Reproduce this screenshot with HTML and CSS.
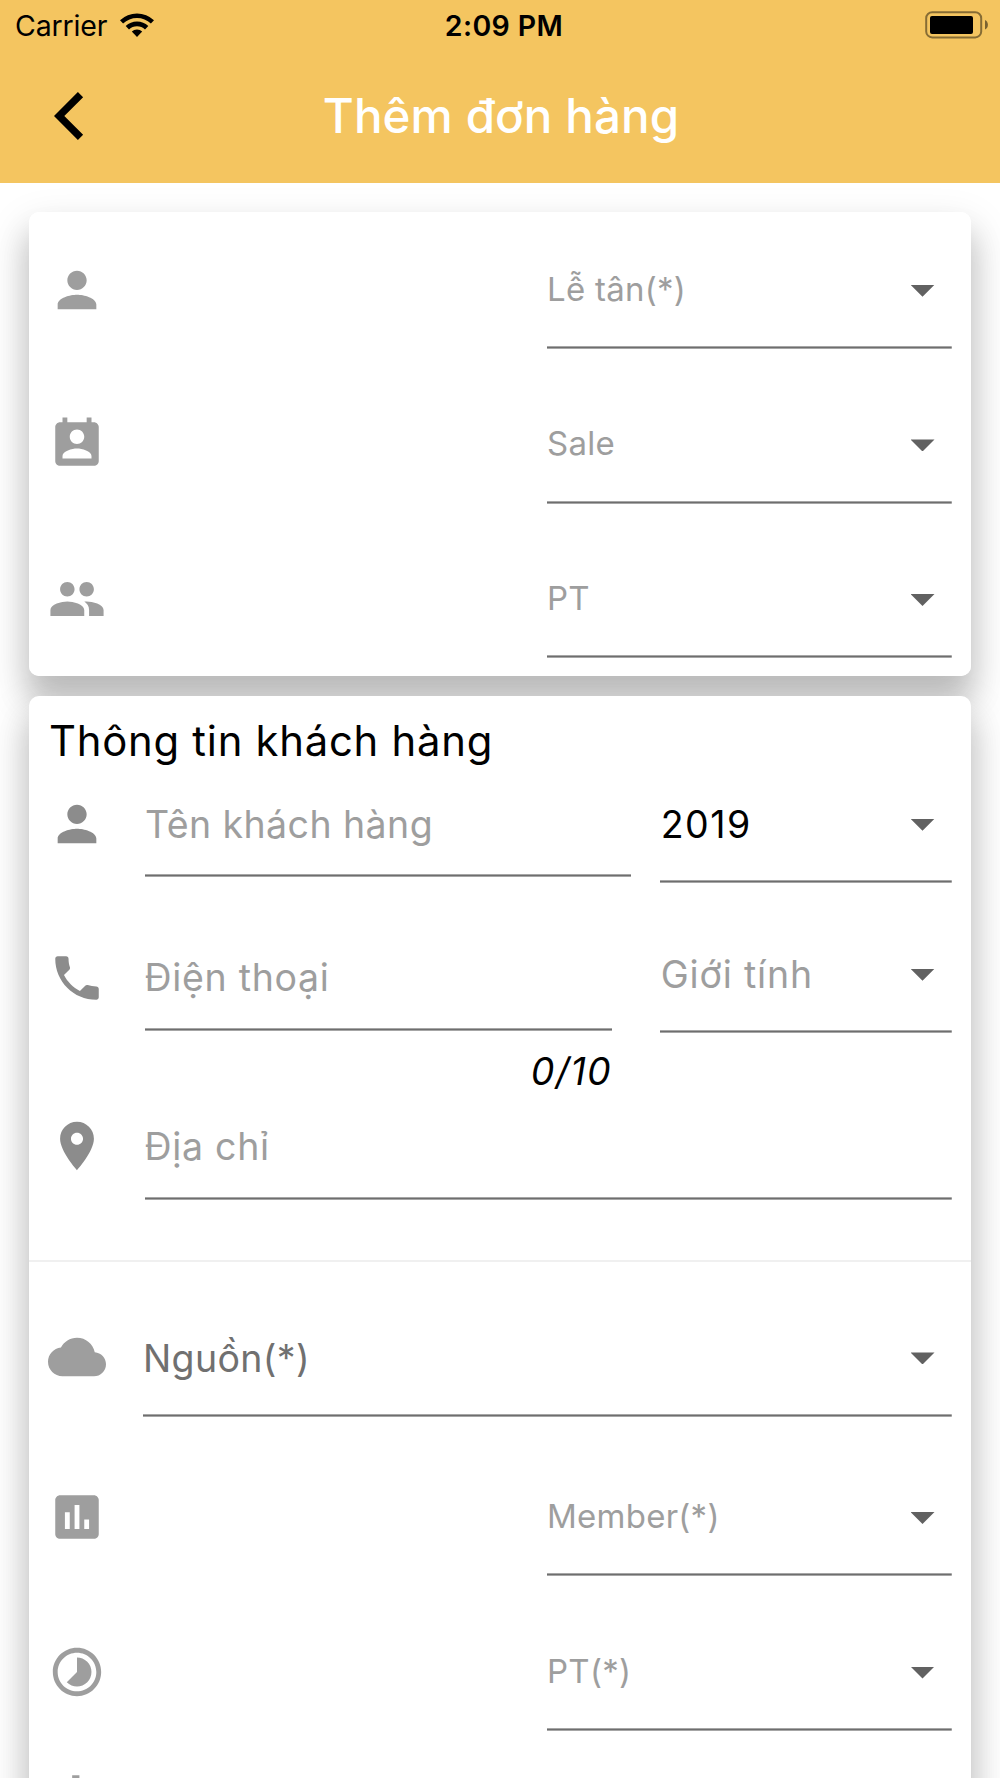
FILE: index.html
```
<!DOCTYPE html>
<html lang="vi">
<head>
<meta charset="utf-8">
<meta name="viewport" content="width=device-width, initial-scale=1">
<title>Thêm đơn hàng</title>
<link rel="stylesheet" href="styles.css">
</head>
<body>
<div class="screen">
  <header class="header">
    <div class="status">
      <div class="status-left">
        <span class="carrier">Carrier</span>
        <svg class="wifi" viewBox="0 0 34 24" aria-hidden="true">
          <path d="M0 7.2A24.6 24.6 0 0 1 34 7.2L30.9 10.6A20 20 0 0 0 3.1 10.6Z"/>
          <path d="M5.7 13A16.2 16.2 0 0 1 28.3 13L25 16.4A11.6 11.6 0 0 0 9 16.4Z"/>
          <path d="M11.8 18.6A7.5 7.5 0 0 1 22.2 18.6L17 24Z"/>
        </svg>
      </div>
      <span class="clock">2:09 PM</span>
      <svg class="battery" viewBox="0 0 64 28" aria-hidden="true">
        <rect x="1.2" y="1.2" width="55" height="25.2" rx="6" fill="none" stroke="#000" stroke-opacity=".45" stroke-width="2"/>
        <rect x="5" y="5" width="43" height="18" rx="2"/>
        <path d="M60 9v9.6c1.800-.6 2.900-2.500 2.900-4.800S61.800 9.600 60 9z" fill-opacity=".5"/>
      </svg>
    </div>
    <div class="navbar">
      <svg class="back" viewBox="0 0 30 48" aria-hidden="true"><path d="M26.500 2.700L5.200 24L26.500 45.300" fill="none" stroke="#000" stroke-width="7.400"/></svg>
      <h1 class="title">Thêm đơn hàng</h1>
    </div>
  </header>

  <main class="content">
    <section class="card card-staff">
      <div class="row">
        <svg class="icon" viewBox="0 0 24 24"><path d="M12 12c2.210 0 4-1.790 4-4s-1.790-4-4-4-4 1.790-4 4 1.790 4 4 4zm0 2c-2.670 0-8 1.340-8 4v2h16v-2c0-2.660-5.330-4-8-4z"/></svg>
        <div class="select half"><span>Lễ tân(*)</span><i class="caret"></i></div>
      </div>
      <div class="row">
        <svg class="icon" viewBox="0 0 24 24"><path d="M19 3h-1V1h-2v2H8V1H6v2H5c-1.110 0-2 .9-2 2v14c0 1.100.89 2 2 2h14c1.100 0 2-.9 2-2V5c0-1.100-.9-2-2-2zm-7 3c1.660 0 3 1.340 3 3s-1.340 3-3 3-3-1.340-3-3 1.340-3 3-3zm6 12H6v-1c0-2 4-3.100 6-3.100s6 1.100 6 3.100v1z"/></svg>
        <div class="select half"><span>Sale</span><i class="caret"></i></div>
      </div>
      <div class="row">
        <svg class="icon" viewBox="0 0 24 24"><path d="M16 11c1.660 0 2.990-1.340 2.990-3S17.660 5 16 5c-1.660 0-3 1.340-3 3s1.340 3 3 3zm-8 0c1.660 0 2.990-1.340 2.990-3S9.660 5 8 5C6.340 5 5 6.340 5 8s1.340 3 3 3zm0 2c-2.330 0-7 1.170-7 3.500V19h14v-2.500c0-2.330-4.670-3.500-7-3.500zm8 0c-.29 0-.62.020-.97.050 1.160.84 1.970 1.970 1.970 3.450V19h6v-2.500c0-2.330-4.670-3.500-7-3.500z"/></svg>
        <div class="select half"><span>PT</span><i class="caret"></i></div>
      </div>
    </section>

    <section class="card card-customer">
      <h2 class="heading">Thông tin khách hàng</h2>
      <div class="row row-name">
        <svg class="icon dark" viewBox="0 0 24 24"><path d="M12 12c2.210 0 4-1.790 4-4s-1.790-4-4-4-4 1.790-4 4 1.790 4 4 4zm0 2c-2.670 0-8 1.340-8 4v2h16v-2c0-2.660-5.330-4-8-4z"/></svg>
        <div class="field name">Tên khách hàng</div>
        <div class="select third year"><span>2019</span><i class="caret"></i></div>
      </div>
      <div class="row row-phone">
        <svg class="icon dark" viewBox="0 0 24 24"><path d="M6.620 10.790c1.440 2.830 3.760 5.140 6.590 6.590l2.200-2.200c.27-.27.67-.36 1.020-.24 1.120.37 2.330.57 3.570.57.55 0 1 .45 1 1V20c0 .55-.45 1-1 1-9.390 0-17-7.610-17-17 0-.55.45-1 1-1h3.500c.55 0 1 .45 1 1 0 1.250.2 2.450.57 3.570.11.35.030.74-.25 1.020l-2.200 2.200z"/></svg>
        <div class="phone-col">
          <div class="field phone">Điện thoại</div>
          <div class="counter">0/10</div>
        </div>
        <div class="select third gender"><span>Giới tính</span><i class="caret"></i></div>
      </div>
      <div class="row row-address">
        <svg class="icon dark" viewBox="0 0 24 24"><path d="M12 2C8.130 2 5 5.130 5 9c0 5.250 7 13 7 13s7-7.750 7-13c0-3.870-3.130-7-7-7zm0 9.500c-1.380 0-2.500-1.120-2.500-2.500s1.120-2.500 2.500-2.500 2.500 1.120 2.500 2.500-1.120 2.500-2.500 2.500z"/></svg>
        <div class="field address">Địa chỉ</div>
      </div>
      <hr class="divider">
      <div class="row row-source">
        <svg class="icon" viewBox="0 0 24 24"><path d="M19.350 10.040C18.670 6.590 15.640 4 12 4 9.110 4 6.600 5.640 5.350 8.040 2.340 8.360 0 10.910 0 14c0 3.310 2.690 6 6 6h13c2.760 0 5-2.240 5-5 0-2.640-2.050-4.780-4.650-4.960z"/></svg>
        <div class="select source"><span>Nguồn(*)</span><i class="caret"></i></div>
      </div>
      <div class="row">
        <svg class="icon" viewBox="0 0 24 24"><path d="M19 3H5c-1.100 0-2 .9-2 2v14c0 1.100.9 2 2 2h14c1.100 0 2-.9 2-2V5c0-1.100-.9-2-2-2zM9 17H7v-7h2v7zm4 0h-2V7h2v10zm4 0h-2v-4h2v4z"/></svg>
        <div class="select half"><span>Member(*)</span><i class="caret"></i></div>
      </div>
      <div class="row row-pt">
        <svg class="icon" viewBox="0 0 24 24"><path d="M12 6v6l-4.240 4.240c2.340 2.340 6.140 2.340 8.490 0 2.340-2.340 2.340-6.140 0-8.490C15.070 6.590 13.530 6 12 6zm0-4C6.480 2 2 6.480 2 12s4.480 10 10 10 10-4.480 10-10S17.520 2 12 2zm0 18c-4.420 0-8-3.580-8-8s3.580-8 8-8 8 3.580 8 8-3.580 8-8 8z"/></svg>
        <div class="select half"><span>PT(*)</span><i class="caret"></i></div>
      </div>
      <div class="row">
        <svg class="icon" viewBox="0 0 24 24"><path d="M11.800 10.900c-2.270-.59-3-1.200-3-2.150 0-1.090 1.010-1.850 2.700-1.850 1.780 0 2.440.85 2.500 2.100h2.210c-.07-1.720-1.120-3.300-3.210-3.810V3h-3v2.160c-1.940.42-3.500 1.680-3.500 3.610 0 2.310 1.910 3.460 4.700 4.130 2.500.6 3 1.480 3 2.410 0 .69-.49 1.790-2.700 1.790-2.060 0-2.870-.92-2.980-2.100h-2.200c.12 2.190 1.760 3.420 3.680 3.830V21h3v-2.150c1.950-.37 3.500-1.500 3.500-3.550 0-2.840-2.430-3.810-4.700-4.400z"/></svg>
      </div>
    </section>
  </main>
</div>
</body>
</html>
```
FILE: styles.css
```
* { box-sizing: border-box; }

body {
  margin: 0;
  background: #fff;
  font-family: Inter, "Liberation Sans", sans-serif;
  color: #000;
}

.screen {
  width: 1000px;
  height: 1778px;
  overflow: hidden;
  background: #fff;
}

/* Header: status bar and navigation bar */
.header {
  position: relative;
  z-index: 1;
  height: 183.300px;
  background: #f4c560;
}

.status {
  display: grid;
  grid-template-columns: 1fr auto 1fr;
  align-items: center;
  height: 48px;
  padding: 0 11px 0 15px;
  font-size: 28.500px;
  line-height: 48px;
}

.status-left {
  display: flex;
  align-items: center;
  gap: 13px;
}

.carrier { letter-spacing: -0.150px; padding-top: 2px; }
.clock { font-weight: 600; letter-spacing: 0.400px; padding: 2px 0 0 4px; }
.wifi { width: 34px; height: 24px; margin-bottom: 1px; }
.battery { width: 64px; height: 28px; margin-bottom: 1px; justify-self: end; }

.navbar {
  display: grid;
  grid-template-columns: 107px 1fr 107px;
  align-items: center;
  height: 136px;
}

.back {
  width: 30px;
  height: 48px;
  margin-left: 53.500px;
}

.title {
  margin: 0;
  padding-left: 2px;
  text-align: center;
  font-size: 47.500px;
  font-weight: 500;
  line-height: 58px;
  letter-spacing: 0.100px;
  color: #fff;
}

/* Cards */
.content {
  display: flex;
  flex-direction: column;
  gap: 19.500px;
  padding: 29.200px 29px 0;
  position: relative;
  z-index: 0;
}

.card {
  position: relative;
  border-radius: 10px;
  background: #fff;
}

/* Shadows sit beneath every card, so neighbours never shade each other */
.card::before {
  content: "";
  position: absolute;
  inset: 0;
  z-index: -1;
  border-radius: inherit;
  box-shadow:
    0 24px 30px 1px rgba(0, 0, 0, .17),
    0 18px 40px 5px rgba(0, 0, 0, .13);
}

.card-staff {
  height: 464px;
  padding-top: 48.300px;
}

.card-customer { height: 1200px; }

.heading {
  margin: 0;
  padding: 20px 0 0 20px;
  height: 98.700px;
  font-size: 41.800px;
  font-weight: 400;
  line-height: 50px;
  letter-spacing: 0.750px;
}

.row {
  display: flex;
  align-items: flex-start;
  height: 154.600px;
  padding: 0 19.500px 0 19.300px;
}

.row-name { height: 154px; }
.row-phone { height: 168.600px; }
.row-address { height: 142.700px; }
.row-source { height: 159.500px; }
.row-pt { height: 125px; }

.icon {
  flex: none;
  width: 58px;
  height: 58px;
  fill: #9e9e9e;
}

.icon.dark { fill: #8c8c8c; }

/* Inputs share a soft three-pixel underline */
.field,
.select {
  background: linear-gradient(#a6a6a6 0 1px, #6e6e6e 1px 2px, #a6a6a6 2px 3px) bottom / 100% 3px no-repeat;
  font-size: 37.500px;
  line-height: 59px;
  color: #9e9e9e;
}

.field {
  height: 82.300px;
  margin-left: 38.700px;
}

.name { width: 486px; letter-spacing: 0.420px; }
.phone { width: 467px; line-height: 57px; letter-spacing: 0.700px; text-indent: -0.500px; }
.address { flex: 1; letter-spacing: 0.700px; text-indent: -0.500px; }

.counter {
  padding-top: 13px;
  text-align: right;
  font-size: 37.500px;
  font-style: italic;
  line-height: 55px;
  letter-spacing: 1.300px;
}

.select {
  display: flex;
  justify-content: space-between;
  height: 88.500px;
  margin-left: auto;
  padding-right: 17px;
}

.half {
  width: 404.500px;
  font-size: 33px;
  line-height: 57.500px;
  letter-spacing: 0.250px;
}

.third { width: 291.500px; }
.third span { padding-left: 0.700px; }
.year { color: #000; letter-spacing: 1.500px; }
.gender { margin-top: -4px; letter-spacing: 0.850px; }
.source { width: 808.500px; line-height: 61px; color: #707070; letter-spacing: 0.350px; }

.caret {
  width: 24px;
  height: 12px;
  margin-top: 24px;
  background: #616161;
  clip-path: polygon(0 0, 100% 0, 50% 100%);
}

.divider {
  height: 2px;
  margin: 0 0 66.500px;
  border: 0;
  background: #f0f0f0;
}
```
